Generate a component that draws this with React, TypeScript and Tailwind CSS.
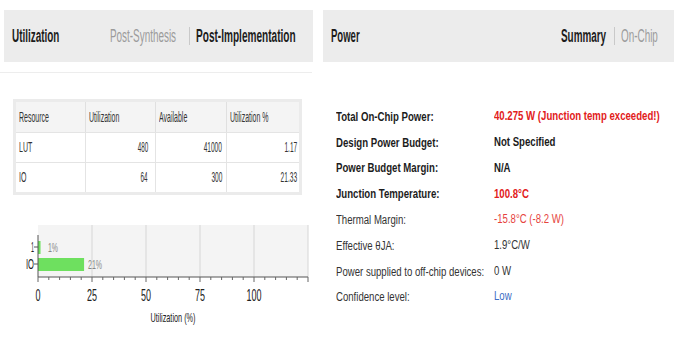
import React, { ReactNode } from "react";

const font = "font-['Liberation_Sans','Arial',sans-serif]";

// text squeezed horizontally, as in the reference
const Sq = ({ className, children }: { className: string; children: ReactNode }) => (
  <span className={`inline-block whitespace-nowrap ${className}`}>{children}</span>
);

const rows = [
  { name: "LUT", used: 480, avail: 41000, pct: "1.17" },
  { name: "IO", used: 64, avail: 300, pct: "21.33" },
];

const power = [
  { label: "Total On-Chip Power:", value: "40.275 W (Junction temp exceeded!)", bold: true, tone: "text-[#e2201b]" },
  { label: "Design Power Budget:", value: "Not Specified", bold: true, tone: "text-[#1a1a1a]" },
  { label: "Power Budget Margin:", value: "N/A", bold: true, tone: "text-[#1a1a1a]" },
  { label: "Junction Temperature:", value: "100.8°C", bold: true, tone: "text-[#e2201b]" },
  { label: "Thermal Margin:", value: "-15.8°C (-8.2 W)", bold: false, tone: "text-[#e6433d]" },
  { label: "Effective θJA:", value: "1.9°C/W", bold: false, tone: "text-[#333]" },
  { label: "Power supplied to off-chip devices:", value: "0 W", bold: false, tone: "text-[#333]" },
  { label: "Confidence level:", value: "Low", bold: false, tone: "text-[#3b6cc4]" },
];

const UtilChart = () => {
  const x0 = 38;
  const scale = 270 / 125;
  const ticks = [0, 25, 50, 75, 100];
  const minor = Array.from({ length: 26 }, (_, i) => i * 5);
  return (
    <svg width="318" height="120" className="block">
      <rect x={x0} y={10} width={270} height={52} fill="#f4f4f4" />
      {[25, 50, 75, 100, 125].map((t) => (
        <line key={t} x1={x0 + t * scale} x2={x0 + t * scale} y1={10} y2={62} stroke="#d6d6d6" />
      ))}
      <rect x={x0} y={26} width={1.17 * scale} height={13} fill="#6ee05f" />
      <rect x={x0} y={43} width={21.33 * scale} height={13} fill="#6ee05f" />
      <text x={48} y={37} fontSize="12" fill="#888" textLength="10" lengthAdjust="spacingAndGlyphs">1%</text>
      <text x={88} y={54} fontSize="12" fill="#888" textLength="14" lengthAdjust="spacingAndGlyphs">21%</text>
      <line x1={x0} x2={x0} y1={20} y2={62} stroke="#555" />
      <line x1={x0} x2={308} y1={62} y2={62} stroke="#555" />
      {minor.map((m) => (
        <line key={m} x1={x0 + m * scale} x2={x0 + m * scale} y1={62} y2={m % 25 === 0 ? 67 : 65} stroke="#666" />
      ))}
      <line x1={34} x2={x0} y1={32} y2={32} stroke="#555" />
      <line x1={34} x2={x0} y1={49} y2={49} stroke="#555" />
      <text x={31} y={37} fontSize="14" fill="#222" textLength="3" lengthAdjust="spacingAndGlyphs">1</text>
      <text x={26} y={54} fontSize="14" fill="#222" textLength="8" lengthAdjust="spacingAndGlyphs">IO</text>
      {ticks.map((t) => (
        <text
          key={t}
          x={x0 + t * scale}
          y={86}
          fontSize="17"
          fill="#222"
          textAnchor="middle"
          textLength={t === 0 ? 5 : t === 100 ? 15 : 10}
          lengthAdjust="spacingAndGlyphs"
        >
          {t}
        </text>
      ))}
      <text x={173} y={107} fontSize="13" fill="#222" textAnchor="middle" textLength="45" lengthAdjust="spacingAndGlyphs">
        Utilization (%)
      </text>
    </svg>
  );
};

export default function App() {
  return (
    <div className={`flex w-[676px] h-[340px] overflow-hidden bg-white text-[#1c1c1c] ${font}`}>
      {/* Utilization panel */}
      <div className="w-[318px] shrink-0 pt-[10px]">
        <div className="ml-[4px] w-[309px] h-[52px] bg-[#ececec] flex items-center pl-[8px]">
          <div className="w-[47px] shrink-0">
            <Sq className="origin-left scale-x-[0.55] text-[18px] font-bold">Utilization</Sq>
          </div>
          <div className="ml-[51px] w-[65px] shrink-0">
            <Sq className="origin-left scale-x-[0.55] text-[18px] text-[#9b9b9b]">Post-Synthesis</Sq>
          </div>
          <div className="ml-[14px] w-px h-[18px] shrink-0 bg-[#c9c9c9]" />
          <div className="ml-[6px] w-[99px] shrink-0">
            <Sq className="origin-left scale-x-[0.56] text-[18px] font-bold">Post-Implementation</Sq>
          </div>
        </div>
        <div className="mt-[10px] w-[312px] h-px bg-[#ededed]" />

        <div className="mt-[26px] ml-[13px] w-[289px] border-[3px] border-[#ebebeb] text-[14px] text-[#333]">
          <div className="grid grid-cols-[70px_70px_71px_1fr] bg-[#f4f4f4] h-[30px]">
            <div className="pl-[3px] flex items-center border-r border-[#e0e0e0]">
              <Sq className="origin-left scale-x-[0.5]">Resource</Sq>
            </div>
            <div className="pl-[3px] flex items-center border-r border-[#e0e0e0]">
              <Sq className="origin-left scale-x-[0.5]">Utilization</Sq>
            </div>
            <div className="pl-[3px] flex items-center border-r border-[#e0e0e0]">
              <Sq className="origin-left scale-x-[0.5]">Available</Sq>
            </div>
            <div className="pl-[3px] flex items-center">
              <Sq className="origin-left scale-x-[0.5]">Utilization %</Sq>
            </div>
          </div>
          {rows.map((r) => (
            <div key={r.name} className="grid grid-cols-[70px_70px_71px_1fr] bg-white h-[30px] border-t border-[#e4e4e4]">
              <div className="pl-[3px] flex items-center border-r border-[#e4e4e4]">
                <Sq className="origin-left scale-x-[0.5]">{r.name}</Sq>
              </div>
              <div className="pr-[7px] flex items-center justify-end border-r border-[#e4e4e4]">
                <Sq className="origin-right scale-x-[0.45]">{r.used}</Sq>
              </div>
              <div className="pr-[4px] flex items-center justify-end border-r border-[#e4e4e4]">
                <Sq className="origin-right scale-x-[0.47]">{r.avail}</Sq>
              </div>
              <div className="pr-[2px] flex items-center justify-end">
                <Sq className="origin-right scale-x-[0.47]">{r.pct}</Sq>
              </div>
            </div>
          ))}
        </div>

        <div className="mt-[20px]">
          <UtilChart />
        </div>
      </div>

      {/* Power panel */}
      <div className="flex-1 pt-[10px]">
        <div className="ml-[5px] w-[351px] h-[52px] bg-[#ececec] flex items-center pl-[8px]">
          <div className="w-[28px] shrink-0">
            <Sq className="origin-left scale-x-[0.53] text-[18px] font-bold">Power</Sq>
          </div>
          <div className="ml-[202px] w-[45px] shrink-0">
            <Sq className="origin-left scale-x-[0.55] text-[18px] font-bold">Summary</Sq>
          </div>
          <div className="ml-[8px] w-px h-[18px] shrink-0 bg-[#c9c9c9]" />
          <div className="ml-[6px] w-[37px] shrink-0">
            <Sq className="origin-left scale-x-[0.55] text-[18px] text-[#9b9b9b]">On-Chip</Sq>
          </div>
        </div>

        <div className="mt-[41px] ml-[18px] flex flex-col">
          {power.map((p) => (
            <div key={p.label} className="flex h-[25.8px] items-center">
              <div className="w-[158px] shrink-0">
                {p.bold ? (
                  <Sq className="origin-left scale-x-[0.74] text-[13px] font-bold">{p.label}</Sq>
                ) : (
                  <Sq className="origin-left scale-x-[0.8] text-[12px] text-[#333]">{p.label}</Sq>
                )}
              </div>
              {p.bold ? (
                <Sq className={`origin-left scale-x-[0.74] text-[13px] font-bold ${p.tone}`}>{p.value}</Sq>
              ) : (
                <Sq className={`origin-left scale-x-[0.8] text-[12px] ${p.tone}`}>{p.value}</Sq>
              )}
            </div>
          ))}
        </div>
      </div>
    </div>
  );
}
